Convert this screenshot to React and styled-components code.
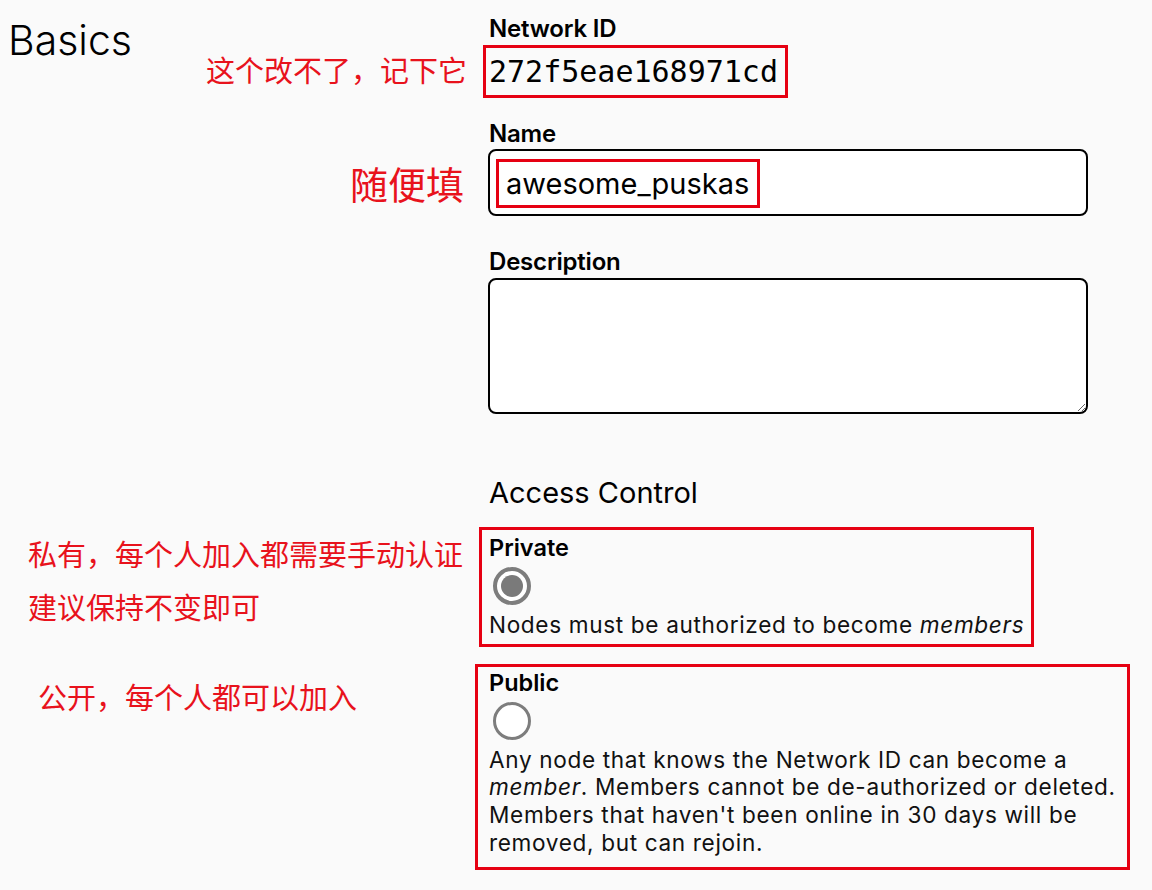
import * as React from 'react';
import styled, { createGlobalStyle, css } from 'styled-components';

const GlobalStyles = createGlobalStyle`
  html, body {
    margin: 0;
    background: #fafafa;
  }

  body {
    color: #000;
    font-family: Inter, "Noto Sans", sans-serif;
  }
`;

const Page = styled.div`
  width: 1152px;
  min-height: 890px;
  padding-top: 15px;
  box-sizing: border-box;
`;

const Row = styled.div`
  display: grid;
  grid-template-columns: 489px 1fr;
  margin-top: ${(p) => p.$gap || 0}px;
`;

const Side = styled.div`
  display: flex;
  flex-direction: column;
  align-items: ${(p) => (p.$end ? 'flex-end' : 'flex-start')};
  justify-content: ${(p) => (p.$bottom ? 'flex-end' : 'flex-start')};
  padding: ${(p) => p.$pad || '0'};
`;

const Title = styled.h1`
  margin: 0 0 0 8px;
  font-size: 41px;
  font-weight: 300;
  line-height: 50px;
  align-self: flex-start;
`;

const Note = styled.p`
  margin: ${(p) => p.$margin || '0'};
  color: #e8121c;
  font-family: "Noto Sans CJK SC", sans-serif;
  font-size: ${(p) => p.$size || 29}px;
  line-height: ${(p) => p.$lh || 36}px;
  white-space: nowrap;
`;

const Field = styled.div`
  display: flex;
  flex-direction: column;
  align-items: flex-start;
`;

const Label = styled.label`
  font-size: 24px;
  font-weight: 600;
  line-height: 28px;
  letter-spacing: -0.2px;
  margin-bottom: ${(p) => p.$after || 0}px;
`;

const Heading = styled.h2`
  margin: 0;
  font-size: 29px;
  font-weight: 400;
  line-height: 34px;
`;

const Mark = styled.span`
  display: inline-block;
  border: 3px solid #e60012;
  ${(p) =>
    p.$mono &&
    css`
      margin-left: -6px;
      padding: 0 7px 0 3px;
      font-family: "DejaVu Sans Mono", monospace;
      font-size: 30px;
      line-height: 47px;
    `}
  ${(p) =>
    p.$inline &&
    css`
      padding: 0 8px 0 7px;
      font-size: 29px;
      line-height: 43px;
    `}
`;

const InputBox = styled.div`
  width: 600px;
  height: 67px;
  box-sizing: border-box;
  margin-left: -1px;
  padding: 8px 0 0 6px;
  border: 2px solid #000;
  border-radius: 8px;
  background: #fff;
`;

const TextArea = styled.textarea`
  display: block;
  width: 600px;
  height: 136px;
  box-sizing: border-box;
  margin-left: -1px;
  border: 2px solid #000;
  border-radius: 8px;
  background: #fff;
  font: inherit;
  outline: none;
`;

const Option = styled.div`
  display: flex;
  flex-direction: column;
  align-items: flex-start;
  gap: 5px;
  width: fit-content;
  border: 3px solid #e60012;
  ${(p) =>
    p.$wide
      ? css`
          margin-left: -14px;
          padding: 2px 11px 10px 11px;
        `
      : css`
          margin-left: -10px;
          padding: 4px 7px 5px 7px;
        `}
`;

const OptionTitle = styled.div`
  font-size: 23.5px;
  font-weight: 600;
  line-height: 28px;
`;

const Radio = styled.span`
  position: relative;
  display: block;
  width: 38px;
  height: 38px;
  box-sizing: border-box;
  margin: 0 0 1px 4px;
  border: ${(p) => (p.$checked ? 4 : 3.5)}px solid #7d7d7d;
  border-radius: 50%;
  background: #fff;

  &::after {
    content: '';
    display: ${(p) => (p.$checked ? 'block' : 'none')};
    position: absolute;
    inset: 4px;
    border-radius: 50%;
    background: #7a7a7a;
  }
`;

const Desc = styled.p`
  margin: 0;
  font-size: 22.6px;
  line-height: 27.7px;
  letter-spacing: 0.65px;
  color: #111;

  em {
    font-style: italic;
  }
`;

const App = () => (
  <>
    <GlobalStyles />
    <Page>
      <Row>
        <Side>
          <Title>Basics</Title>
          <Note $margin='-14px 22px 0 0' style={{ alignSelf: 'flex-end' }}>
            这个改不了，记下它
          </Note>
        </Side>
        <Field>
          <Label $after={2}>Network ID</Label>
          <Mark $mono>272f5eae168971cd</Mark>
        </Field>
      </Row>

      <Row $gap={22}>
        <Side $end $bottom $pad='0 25px 10px 0'>
          <Note $size={38} $lh={46}>
            随便填
          </Note>
        </Side>
        <Field>
          <Label $after={1}>Name</Label>
          <InputBox>
            <Mark $inline>awesome_puskas</Mark>
          </InputBox>
        </Field>
      </Row>

      <Row $gap={32}>
        <Side />
        <Field>
          <Label $after={2}>Description</Label>
          <TextArea />
        </Field>
      </Row>

      <Row $gap={62}>
        <Side />
        <Heading>Access Control</Heading>
      </Row>

      <Row $gap={17}>
        <Side $pad='0 0 0 28px'>
          <Note $lh={53}>私有，每个人加入都需要手动认证</Note>
          <Note $lh={53}>建议保持不变即可</Note>
        </Side>
        <Option>
          <OptionTitle>Private</OptionTitle>
          <Radio $checked />
          <Desc>
            Nodes must be authorized to become <em>members</em>
          </Desc>
        </Option>
      </Row>

      <Row $gap={17}>
        <Side $pad='6px 0 0 38px'>
          <Note $lh={53}>公开，每个人都可以加入</Note>
        </Side>
        <Option $wide>
          <OptionTitle>Public</OptionTitle>
          <Radio />
          <Desc>
            Any node that knows the Network ID can become a
            <br />
            <em>member</em>. Members cannot be de-authorized or deleted.
            <br />
            Members that haven't been online in 30 days will be
            <br />
            removed, but can rejoin.
          </Desc>
        </Option>
      </Row>
    </Page>
  </>
);

export default App;
